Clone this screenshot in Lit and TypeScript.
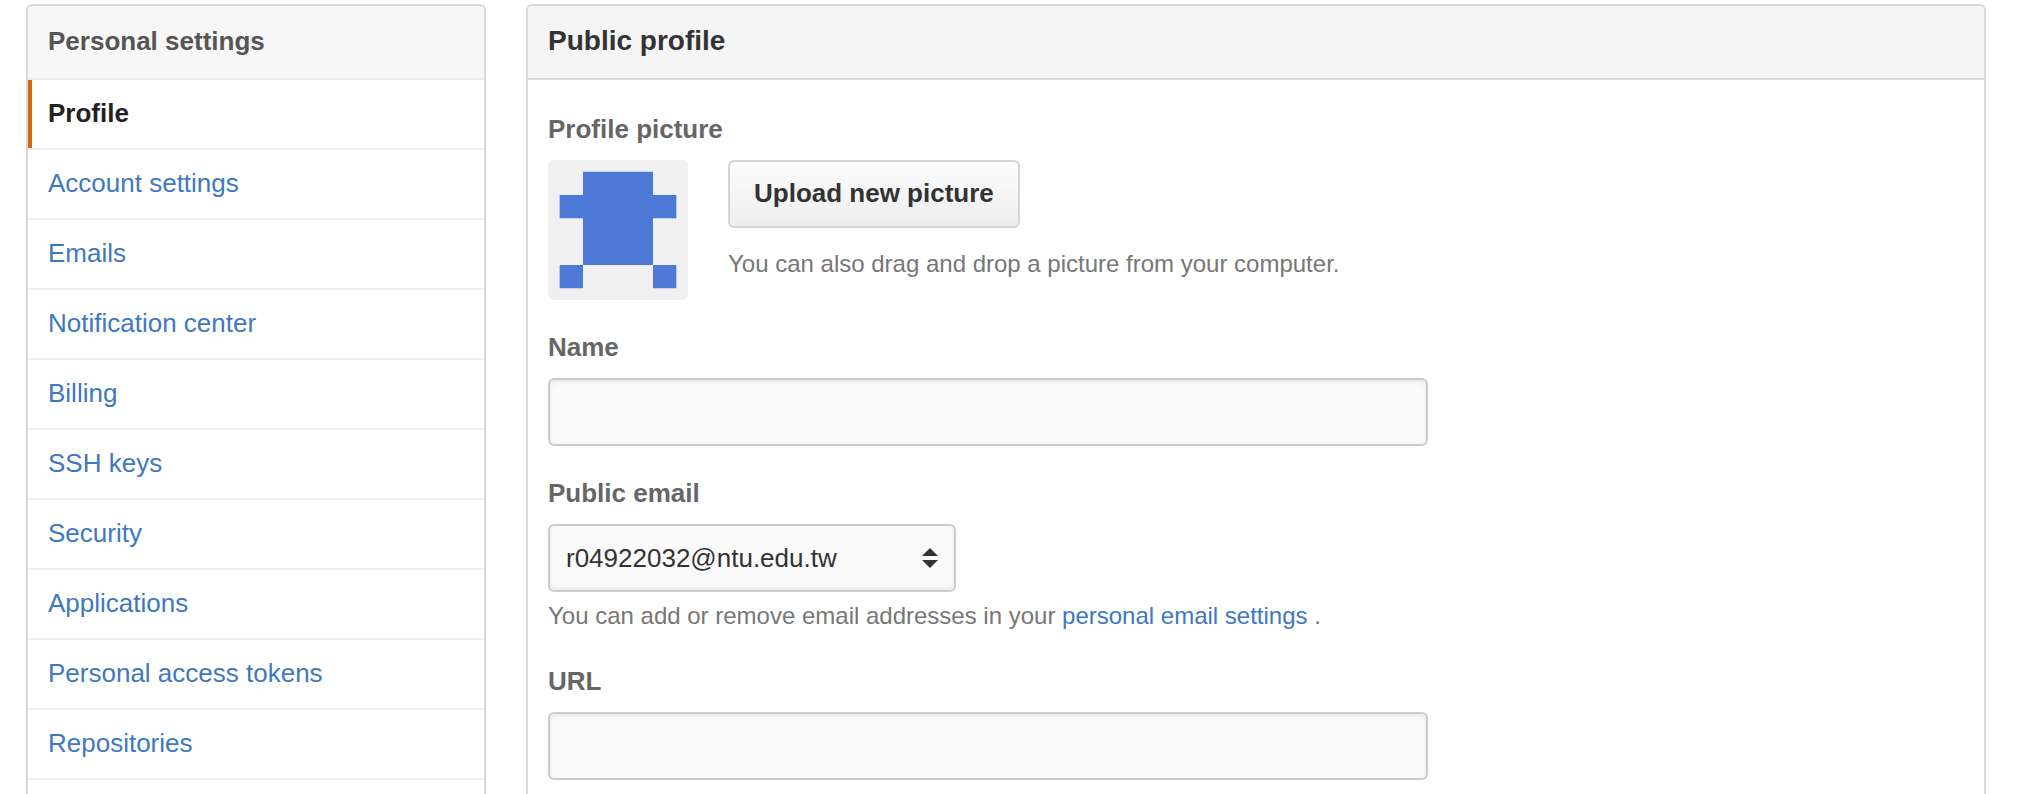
import { LitElement, html, css } from "lit";
import { customElement, property } from "lit/decorators.js";

@customElement("settings-menu")
class SettingsMenu extends LitElement {
  @property() active = "Profile";

  static styles = css`
    :host {
      display: block;
      box-sizing: border-box;
      background: #fff;
      border: 2px solid #d8d8d8;
      border-bottom: 0;
      border-radius: 6px 6px 0 0;
      overflow: hidden;
    }
    .heading {
      margin: 0;
      padding: 18px 20px 20px;
      font-size: 26px;
      line-height: 34px;
      color: #555;
      background: #f7f7f7;
      border-bottom: 2px solid #eee;
    }
    .list {
      margin: 0;
      padding: 0;
      list-style: none;
    }
    .item {
      border-bottom: 2px solid #eee;
    }
    .link {
      display: block;
      padding: 16px 20px 18px;
      line-height: 34px;
      color: #4078c0;
      text-decoration: none;
    }
    .link[aria-current] {
      padding-left: 16px;
      border-left: 4px solid #d26911;
      font-weight: bold;
      color: #222;
    }
  `;

  private items = [
    "Profile",
    "Account settings",
    "Emails",
    "Notification center",
    "Billing",
    "SSH keys",
    "Security",
    "Applications",
    "Personal access tokens",
    "Repositories",
  ];

  render() {
    return html`
      <nav aria-labelledby="menu-heading">
        <h2 class="heading" id="menu-heading">Personal settings</h2>
        <ul class="list">
          ${this.items.map(
            (name) => html`<li class="item">
              ${name === this.active
                ? html`<a class="link" href="#" aria-current="page">${name}</a>`
                : html`<a class="link" href="#">${name}</a>`}
            </li>`
          )}
        </ul>
      </nav>
    `;
  }
}

@customElement("profile-panel")
class ProfilePanel extends LitElement {
  static styles = css`
    :host {
      display: block;
      box-sizing: border-box;
      background: #fff;
      border: 2px solid #d8d8d8;
      border-bottom: 0;
      border-radius: 6px 6px 0 0;
      overflow: hidden;
    }
    .heading {
      margin: 0;
      padding: 18px 20px 20px;
      font-size: 28px;
      line-height: 34px;
      color: #333;
      background: #f5f5f5;
      border-bottom: 2px solid #d8d8d8;
    }
    .form {
      display: flex;
      flex-direction: column;
      gap: 30px;
      padding: 32px 20px 12px;
    }
    .field {
      display: flex;
      flex-direction: column;
      align-items: flex-start;
    }
    .label {
      margin-bottom: 14px;
      line-height: 34px;
      font-weight: bold;
      color: #666;
    }
    .picture {
      display: flex;
      gap: 40px;
    }
    .avatar {
      display: block;
      width: 140px;
      height: 140px;
      border-radius: 6px;
    }
    .upload {
      display: flex;
      flex-direction: column;
      align-items: flex-start;
      gap: 18px;
    }
    .button {
      padding: 14px 24px 16px;
      font: bold 26px/34px "Liberation Sans", Arial, sans-serif;
      color: #333;
      background: linear-gradient(#fcfcfc, #eee);
      border: 2px solid #d5d5d5;
      border-radius: 6px;
      cursor: pointer;
    }
    .note {
      margin: 0;
      font-size: 24px;
      line-height: 36px;
      color: #777;
    }
    .field .note.below {
      margin-top: 6px;
    }
    .note a {
      color: #4078c0;
      text-decoration: none;
    }
    .control {
      box-sizing: border-box;
      height: 68px;
      padding: 0 16px;
      font: 26px/36px "Liberation Sans", Arial, sans-serif;
      color: #333;
      background: #fafafa;
      border: 2px solid #ccc;
      border-radius: 6px;
      box-shadow: inset 0 2px 4px rgba(0, 0, 0, 0.075);
    }
    .text {
      width: 100%;
      max-width: 880px;
    }
    .picker {
      display: grid;
      align-items: center;
      width: 100%;
      max-width: 408px;
    }
    .picker > * {
      grid-area: 1 / 1;
    }
    .select {
      width: 100%;
      appearance: none;
      box-shadow: inset 0 -2px 4px rgba(0, 0, 0, 0.075);
    }
    .arrows {
      justify-self: end;
      margin-right: 18px;
      pointer-events: none;
    }
  `;

  render() {
    return html`
      <h1 class="heading">Public profile</h1>
      <form class="form">
        <div class="field">
          <label class="label" for="upload">Profile picture</label>
          <div class="picture">
            <svg class="avatar" viewBox="0 0 420 420" role="img" aria-label="Avatar">
              <rect width="420" height="420" fill="#f0f0f0" />
              <path
                fill="#4c79d5"
                d="M105 35h210v70h70v70h-70v140h70v70h-70v-70h-210v70h-70v-70h70v-140h-70v-70h70z"
              />
            </svg>
            <div class="upload">
              <button class="button" id="upload" type="button">Upload new picture</button>
              <p class="note">You can also drag and drop a picture from your computer.</p>
            </div>
          </div>
        </div>
        <div class="field">
          <label class="label" for="name">Name</label>
          <input class="control text" id="name" type="text" />
        </div>
        <div class="field">
          <label class="label" for="email">Public email</label>
          <div class="picker">
            <select class="control select" id="email">
              <option>r04922032@ntu.edu.tw</option>
            </select>
            <svg class="arrows" width="16" height="20" viewBox="0 0 16 20" aria-hidden="true">
              <path fill="#333" d="M8 0l8 8H0zM0 12h16l-8 8z" />
            </svg>
          </div>
          <p class="note below">
            You can add or remove email addresses in your
            <a href="#">personal email settings</a> .
          </p>
        </div>
        <div class="field">
          <label class="label" for="url">URL</label>
          <input class="control text" id="url" type="url" />
        </div>
      </form>
    `;
  }
}

@customElement("app-root")
class AppRoot extends LitElement {
  static styles = css`
    :host {
      display: grid;
      grid-template-columns: 460px minmax(0, 1fr);
      gap: 40px;
      box-sizing: border-box;
      min-height: 100vh;
      padding: 4px 40px 0 26px;
      background: #fff;
      font: 26px/36px "Liberation Sans", Arial, sans-serif;
    }
  `;

  render() {
    return html`
      <settings-menu></settings-menu>
      <profile-panel></profile-panel>
    `;
  }
}
